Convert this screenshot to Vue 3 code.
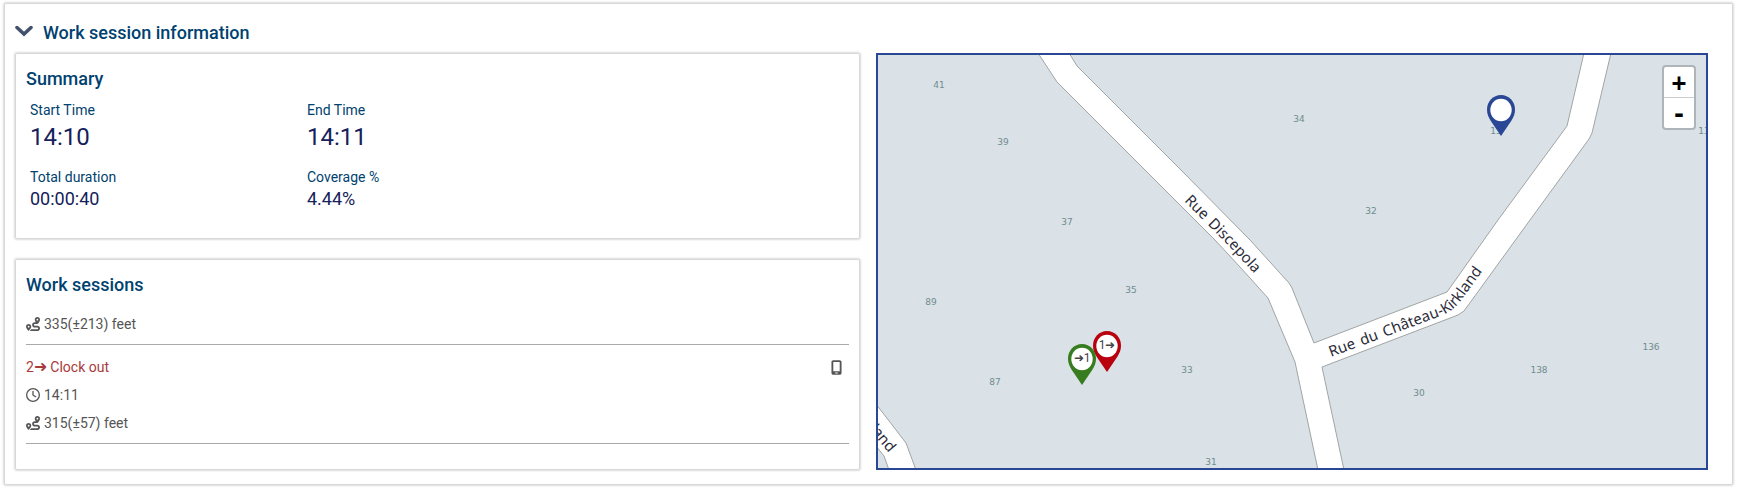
<template>
    <section class="panel">
        <h2 class="panel-title">
            <button type="button" class="toggle" :aria-expanded="isOpen" @click="isOpen = !isOpen">
                <svg class="chevron" :class="{ closed: !isOpen }" viewBox="0 0 18 12" aria-hidden="true">
                    <path d="M2 2.5 9 9 16 2.5" />
                </svg>
                Work session information
            </button>
        </h2>

        <div v-show="isOpen" class="content">
            <div class="left">
                <div class="card">
                    <h3>Summary</h3>
                    <dl class="summary">
                        <div v-for="item in summary" :key="item.label" class="summary-item" :class="{ big: item.big }">
                            <dt>{{ item.label }}</dt>
                            <dd>{{ item.value }}</dd>
                        </div>
                    </dl>
                </div>

                <div class="card sessions">
                    <h3>Work sessions</h3>
                    <ul>
                        <li v-for="session in sessions" :key="session.id">
                            <div v-if="session.action" class="line action">
                                <span>{{ session.number }}<span class="arrow">➜</span> {{ session.action }}</span>
                                <svg class="phone" viewBox="0 0 384 512" aria-label="Mobile">
                                    <path fill-rule="evenodd" d="M16 64C16 28.700 44.700 0 80 0H304c35.300 0 64 28.700 64 64V448c0 35.300-28.700 64-64 64H80c-35.300 0-64-28.700-64-64V64zM144 448c0 8.800 7.200 16 16 16h64c8.800 0 16-7.200 16-16s-7.200-16-16-16H160c-8.800 0-16 7.200-16 16zM304 64H80V384H304V64z" />
                                </svg>
                            </div>
                            <div v-if="session.time" class="line">
                                <svg class="icon" viewBox="0 0 512 512" aria-hidden="true">
                                    <path d="M464 256A208 208 0 1 1 48 256a208 208 0 1 1 416 0zM0 256a256 256 0 1 0 512 0A256 256 0 1 0 0 256zM232 120V256c0 8 4 15.500 10.700 20l96 64c11 7.400 25.900 4.400 33.300-6.700s4.400-25.900-6.700-33.300L280 243.200V120c0-13.300-10.700-24-24-24s-24 10.700-24 24z" />
                                </svg>
                                {{ session.time }}
                            </div>
                            <div class="line">
                                <svg class="icon" viewBox="0 0 512 512" aria-hidden="true">
                                    <path d="M512 96c0 50.200-59.100 125.100-84.600 155c-3.800 4.400-9.400 6.100-14.500 5H320c-17.700 0-32 14.300-32 32s14.300 32 32 32h96c53 0 96 43 96 96s-43 96-96 96H139.600c8.700-9.900 19.300-22.600 30-36.800c6.300-8.400 12.800-17.600 19-27.200H416c17.700 0 32-14.300 32-32s-14.300-32-32-32H320c-53 0-96-43-96-96s43-96 96-96h39.800c-21-31.500-39.800-67.700-39.800-96c0-53 43-96 96-96s96 43 96 96zM117.100 489.100c-3.800 4.300-7.200 8.100-10.100 11.300l-1.800 2-.2-.2c-6 4.600-14.600 4-20-1.800C59.800 473 0 402.500 0 352c0-53 43-96 96-96s96 43 96 96c0 30-21.100 67-43.500 97.900c-10.700 14.700-21.700 28-30.800 38.500l-.6 .7zM128 352a32 32 0 1 0 -64 0 32 32 0 1 0 64 0zM416 128a32 32 0 1 0 0-64 32 32 0 1 0 0 64z" />
                                </svg>
                                {{ session.distance }}
                            </div>
                        </li>
                    </ul>
                </div>
            </div>

            <div class="map">
                <svg class="tiles" viewBox="0 0 828 413" preserveAspectRatio="xMidYMid slice">
                    <defs>
                        <path id="discepola" d="M306 146 L348 188 L388 231" />
                        <path id="kirkland" d="M453 302 L560 262 Q574 257 582 247 L640 167" />
                        <path id="kirkland-west" d="M-20 361 L11 398" />
                    </defs>

                    <path class="road" d="M160 -2 179 27 302 150 337 185 362 212 390 243 417 307 440 415 H466 L444 312 580 260 586 256 652 165 711 84 714 78 733 -2 H706 L689 71 620 165 569 237 436 288 414 233 411 228 372 185 302 114 199 11 191 -2z" />
                    <path class="road" d="M-2 349 28 388 38 415 H11 L6 401 -2 391z" />

                    <text class="street"><textPath href="#discepola">Rue <tspan dx="2">Discepola</tspan></textPath></text>
                    <text class="street"><textPath href="#kirkland">Rue <tspan dx="2">du</tspan> <tspan dx="2">Château-Kirkland</tspan></textPath></text>
                    <text class="street" text-anchor="end"><textPath href="#kirkland-west" startOffset="100%">land</textPath></text>

                    <text v-for="(house, i) in houses" :key="i" class="house" :x="house.x" :y="house.y">{{ house.number }}</text>

                    <g v-for="pin in pins" :key="pin.color" :transform="`translate(${pin.x} ${pin.y})`">
                        <path :fill="pin.color" d="M0 0C8 0 14 6.500 14 14.500C14 19 12.500 22 10.500 25.500L0 41L-10.500 25.500C-12.500 22 -14 19 -14 14.500C-14 6.500 -8 0 0 0z" />
                        <ellipse cx="0" cy="15" rx="10.700" ry="11.300" fill="#fff" />
                        <text class="pin-label" x="0" y="18">{{ pin.label }}</text>
                    </g>
                </svg>

                <div class="zoom">
                    <button type="button" class="zoom-in" aria-label="Zoom in">+</button>
                    <button type="button" class="zoom-out" aria-label="Zoom out">-</button>
                </div>
            </div>
        </div>
    </section>
</template>

<script setup>
import { ref } from 'vue';

const isOpen = ref(true);

const summary = ref([
    { label: 'Start Time', value: '14:10', big: true },
    { label: 'End Time', value: '14:11', big: true },
    { label: 'Total duration', value: '00:00:40' },
    { label: 'Coverage %', value: '4.44%' }
]);

const sessions = ref([
    { id: 1, distance: '335(±213) feet' },
    { id: 2, number: 2, action: 'Clock out', time: '14:11', distance: '315(±57) feet' }
]);

// House numbers, in map units
const houses = [
    { number: '41', x: 61, y: 33 },
    { number: '39', x: 125, y: 90 },
    { number: '37', x: 189, y: 170 },
    { number: '35', x: 253, y: 238 },
    { number: '89', x: 53, y: 250 },
    { number: '87', x: 117, y: 330 },
    { number: '33', x: 309, y: 318 },
    { number: '31', x: 333, y: 410 },
    { number: '34', x: 421, y: 67 },
    { number: '32', x: 493, y: 159 },
    { number: '30', x: 541, y: 341 },
    { number: '138', x: 661, y: 318 },
    { number: '136', x: 773, y: 295 },
    { number: '13', x: 618, y: 79 },
    { number: '13', x: 826, y: 79 }
];

// x, y is the top of the pin
const pins = [
    { x: 623, y: 40, color: '#294795', label: '' },
    { x: 229, y: 276, color: '#b8000f', label: '1➜' },
    { x: 204, y: 289, color: '#377c1e', label: '➜1' }
];
</script>

<style>
body {
    background: #fff;
}
</style>

<style scoped>
.panel {
    margin: 3px 4px 5px;
    padding: 12px 24px 14px 10px;
    border: 1px solid #d8d8d8;
    border-radius: 2px;
    box-shadow: 0 0 2px 1px rgba(0, 0, 0, 0.14);
    font-family: Roboto, sans-serif;
    color: #555;
}

h2,
h3 {
    margin: 0;
    font-size: 18px;
    font-weight: 500;
    line-height: 24px;
    color: #00426f;
}

.panel-title {
    padding: 5px 0 8px;
}

.toggle {
    display: flex;
    align-items: center;
    gap: 10px;
    padding: 0;
    border: 0;
    background: none;
    font: inherit;
    color: inherit;
    cursor: pointer;
}

.chevron {
    width: 18px;
    height: 12px;
    margin-bottom: 5px;
    fill: none;
    stroke: #42526a;
    stroke-width: 3.5;
    stroke-linecap: round;
}

.chevron.closed {
    transform: rotate(-90deg);
}

.content {
    display: grid;
    grid-template-columns: minmax(0, 845fr) minmax(0, 832fr);
    gap: 16px;
}

.left {
    display: flex;
    flex-direction: column;
    gap: 20px;
}

.card {
    padding: 13px 10px 27px;
    border: 1px solid #d8d8d8;
    border-radius: 2px;
    box-shadow: 0 0 2px 1px rgba(0, 0, 0, 0.14);
}

.summary {
    display: grid;
    grid-template-columns: repeat(3, 1fr);
    gap: 13px 8px;
    margin: 9px 0 0;
}

.summary-item {
    padding: 0 4px;
}

.summary-item:nth-child(odd) {
    grid-column: 1;
}

dt {
    font-size: 14px;
    line-height: 20px;
    color: #00426f;
}

dd {
    margin: 0;
    font-size: 18px;
    line-height: 24px;
    color: #14215a;
}

.big dd {
    font-size: 24px;
    line-height: 34px;
}

.sessions {
    flex: 1;
    padding-bottom: 20px;
}

ul {
    margin: 5px 0 0;
    padding: 0;
    list-style: none;
}

li {
    padding: 8px 0 6px;
    border-bottom: 1px solid #aaa;
}

.line {
    display: flex;
    align-items: center;
    gap: 4px;
    font-size: 14px;
    line-height: 28px;
}

.action {
    justify-content: space-between;
    padding-right: 7px;
    color: #a83a3c;
}

.arrow {
    font-size: 16px;
    line-height: 16px;
}

.icon {
    width: 14px;
    height: 14px;
    fill: #555;
}

.phone {
    width: 11px;
    height: 15px;
    fill: #555;
}

.map {
    position: relative;
    min-height: 413px;
    border: 2px solid #294795;
    background: #dae1e7;
}

.tiles {
    position: absolute;
    inset: 0;
    width: 100%;
    height: 100%;
}

.road {
    fill: #fff;
    stroke: #a0a5a3;
    stroke-width: 1;
}

.street {
    font-family: "Noto Sans", sans-serif;
    font-size: 15px;
    fill: #2b2b38;
}

.house {
    font-family: "DejaVu Sans", sans-serif;
    font-size: 9px;
    text-anchor: middle;
    fill: #6f8c8e;
}

.pin-label {
    font-size: 12px;
    text-anchor: middle;
    fill: #444;
}

.zoom {
    position: absolute;
    top: 10px;
    right: 10px;
    display: flex;
    flex-direction: column;
    border: 2px solid rgba(0, 0, 0, 0.2);
    border-radius: 4px;
    background: #fff;
    background-clip: padding-box;
}

.zoom button {
    width: 30px;
    height: 30px;
    padding: 3px 0 0;
    border: 0;
    background: none;
    font: bold 24px/27px "DejaVu Sans Mono", monospace;
    color: #000;
    cursor: pointer;
}

.zoom .zoom-in {
    height: 31px;
    border-bottom: 1px solid #ccc;
}
</style>
